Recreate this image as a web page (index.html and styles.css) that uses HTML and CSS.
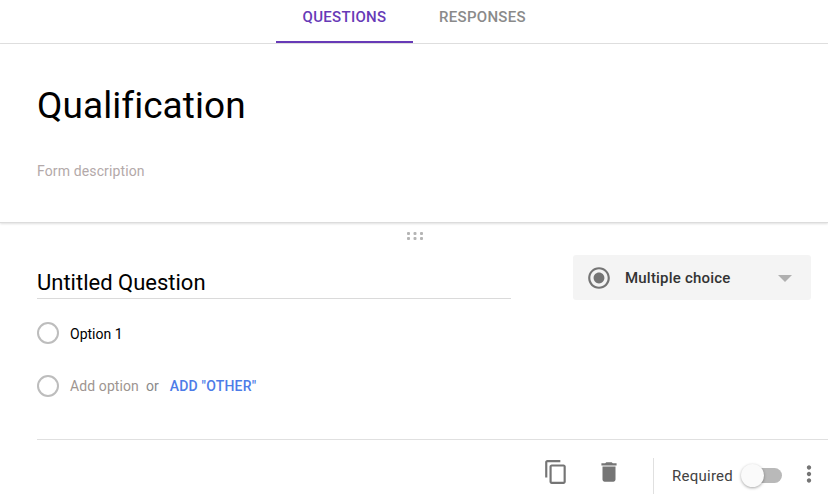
FILE: index.html
```html
<!DOCTYPE html>
<html lang="en">
<head>
<meta charset="utf-8">
<title>Qualification</title>
<link rel="stylesheet" href="styles.css">
</head>
<body>
<nav class="tabs">
  <a class="tab tab-active">QUESTIONS</a>
  <a class="tab">RESPONSES</a>
</nav>
<header class="form-head">
  <h1 class="form-title">Qualification</h1>
  <p class="form-desc">Form description</p>
</header>
<section class="question">
  <div class="drag" aria-hidden="true">
    <svg width="18" height="10" viewBox="0 0 18 10"><g fill="#b5b5b5"><rect x="1" y="1" width="3" height="3" rx="1"/><rect x="7.500" y="1" width="3" height="3" rx="1"/><rect x="14" y="1" width="3" height="3" rx="1"/><rect x="1" y="6" width="3" height="3" rx="1"/><rect x="7.500" y="6" width="3" height="3" rx="1"/><rect x="14" y="6" width="3" height="3" rx="1"/></g></svg>
  </div>
  <div class="q-top">
    <div class="q-left">
      <div class="q-title">Untitled Question</div>
      <div class="option option-first"><span class="radio"></span><span class="opt-text">Option 1</span></div>
      <div class="option option-add"><span class="radio"></span><span class="add-text">Add option</span><span class="or">or</span><span class="add-other">ADD "OTHER"</span></div>
    </div>
    <div class="type-select">
      <svg class="type-icon" width="26" height="26" viewBox="0 0 24 24"><path fill="#757575" d="M12 7c-2.760 0-5 2.240-5 5s2.240 5 5 5 5-2.240 5-5-2.240-5-5-5zm0-5C6.480 2 2 6.480 2 12s4.480 10 10 10 10-4.480 10-10S17.520 2 12 2zm0 18c-4.420 0-8-3.580-8-8s3.580-8 8-8 8 3.580 8 8-3.580 8-8 8z"/></svg>
      <span class="type-label">Multiple choice</span>
      <span class="caret"></span>
    </div>
  </div>
  <div class="q-foot">
    <svg class="tool-copy" width="26" height="26" viewBox="0 0 24 24"><path fill="#757575" d="M16 1H4c-1.100 0-2 .9-2 2v14h2V3h12V1zm3 4H8c-1.100 0-2 .9-2 2v14c0 1.100.9 2 2 2h11c1.100 0 2-.9 2-2V7c0-1.100-.9-2-2-2zm0 16H8V7h11v14z"/></svg>
    <svg class="tool-trash" width="26" height="26" viewBox="0 0 24 24"><path fill="#757575" d="M6 19c0 1.100.9 2 2 2h8c1.100 0 2-.9 2-2V7H6v12zM19 4h-3.500l-1-1h-5l-1 1H5v2h14V4z"/></svg>
    <span class="foot-sep"></span>
    <span class="req-label">Required</span>
    <span class="switch"><span class="knob"></span></span>
    <svg class="tool-more" width="26" height="26" viewBox="0 0 24 24"><path fill="#757575" d="M12 8c1.100 0 2-.9 2-2s-.9-2-2-2-2 .9-2 2 .9 2 2 2zm0 2c-1.100 0-2 .9-2 2s.9 2 2 2 2-.9 2-2-.9-2-2-2zm0 6c-1.100 0-2 .9-2 2s.9 2 2 2 2-.9 2-2-.9-2-2-2z"/></svg>
  </div>
</section>
</body>
</html>
```
FILE: styles.css
```css
* { box-sizing: border-box; }
html, body { margin: 0; height: 500px; overflow: hidden; background: #fff; }
body { font-family: Roboto, "Noto Sans", sans-serif; color: #000; }

.tabs {
  height: 44px;
  display: flex;
  padding-left: 276px;
  gap: 26px;
  border-bottom: 1px solid #e0e0e0;
}
.tab {
  font-size: 15px;
  font-weight: 500;
  color: #8a8a8a;
  letter-spacing: .3px;
  height: 43px;
  line-height: 34px;
}
.tab-active {
  width: 137px;
  text-align: center;
  color: #673ab7;
  border-bottom: 2px solid #673ab7;
}

.form-head {
  height: 179px;
  padding: 39px 37px 0;
  border-bottom: 1px solid #dcdcdc;
  box-shadow: 0 1px 2px rgba(0,0,0,.12);
}
.form-title {
  margin: 0;
  font-size: 37px;
  font-weight: 400;
  line-height: 46px;
  letter-spacing: .05px;
}
.form-desc {
  margin: 32px 0 0;
  font-size: 14px;
  line-height: 20px;
  letter-spacing: .13px;
  color: #b3a9a9;
}

.question { height: 277px; display: flex; flex-direction: column; }
.drag { height: 24px; display: flex; justify-content: center; padding-top: 8px; padding-left: 2px; }
.q-top {
  display: flex;
  justify-content: space-between;
  padding: 8px 17px 0 37px;
  height: 192px;
}
.q-left { width: 474px; }
.q-title {
  height: 35px;
  margin-top: 9px;
  padding-top: 5px;
  font-size: 22px;
  line-height: 28px;
  border-bottom: 1px solid #dadada;
}
.option { display: flex; align-items: center; height: 22px; }
.option-first { margin-top: 23px; }
.option-add { margin-top: 31px; }
.radio {
  width: 22px;
  height: 22px;
  border: 2px solid #bdbdbd;
  border-radius: 50%;
  margin-right: 11px;
  flex: none;
}
.opt-text { font-size: 14px; padding-top: 2px; }
.add-text { font-size: 14px; letter-spacing: .1px; color: #9e9590; }
.or { font-size: 14px; color: #8a8a8a; margin-left: 7px; }
.add-other { font-size: 14px; font-weight: 500; letter-spacing: .2px; color: #4d7ce8; margin-left: 11px; }

.type-select {
  width: 238px;
  height: 45px;
  background: #f4f4f4;
  border-radius: 3px;
  display: flex;
  align-items: center;
  padding-left: 13px;
}
.type-icon { flex: none; }
.type-label { font-size: 15px; font-weight: 500; letter-spacing: .2px; color: #333; margin-left: 13px; flex: 1; }
.caret {
  width: 0;
  height: 0;
  border-left: 7px solid transparent;
  border-right: 7px solid transparent;
  border-top: 7px solid #b0b0b0;
  margin-right: 19px;
  margin-top: 1px;
}

.q-foot {
  margin: 0 0 0 37px;
  flex: 1;
  border-top: 1px solid #e0e0e0;
  display: flex;
  align-items: flex-start;
  padding-top: 18px;
  padding-left: 506px;
}
.tool-copy { margin-top: 1px; flex: none; }
.tool-trash { margin-left: 27px; margin-top: 1px; flex: none; }
.foot-sep { width: 1px; height: 36px; background: #e0e0e0; margin-left: 31px; flex: none; }
.req-label { font-size: 15px; letter-spacing: .25px; color: #424242; margin-left: 18px; line-height: 36px; }
.switch {
  position: relative;
  width: 32px;
  height: 15px;
  margin-left: 17px;
  margin-top: 10px;
  border-radius: 8px;
  background: #b9b9b9;
  flex: none;
}
.knob {
  position: absolute;
  left: -9px;
  top: -4px;
  width: 23px;
  height: 23px;
  border-radius: 50%;
  background: #fafafa;
  box-shadow: 0 1px 3px rgba(0,0,0,.35);
}
.tool-more { margin-left: 14px; margin-top: 3px; flex: none; }
```
